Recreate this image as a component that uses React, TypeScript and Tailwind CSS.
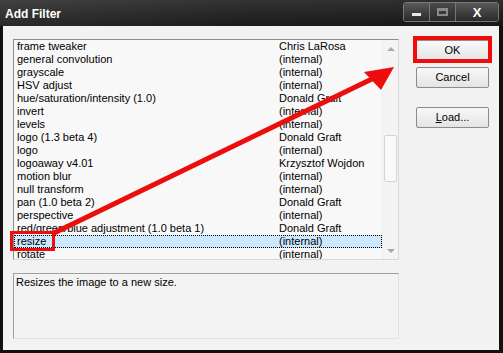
import React from "react";

const rows: [string, string][] = [
  ["frame tweaker", "Chris LaRosa"],
  ["general convolution", "(internal)"],
  ["grayscale", "(internal)"],
  ["HSV adjust", "(internal)"],
  ["hue/saturation/intensity (1.0)", "Donald Graft"],
  ["invert", "(internal)"],
  ["levels", "(internal)"],
  ["logo (1.3 beta 4)", "Donald Graft"],
  ["logo", "(internal)"],
  ["logoaway v4.01", "Krzysztof Wojdon"],
  ["motion blur", "(internal)"],
  ["null transform", "(internal)"],
  ["pan (1.0 beta 2)", "Donald Graft"],
  ["perspective", "(internal)"],
  ["red/green/blue adjustment (1.0 beta 1)", "Donald Graft"],
  ["resize", "(internal)"],
  ["rotate", "(internal)"],
];

function Btn({ children }: { children: React.ReactNode }) {
  return (
    <div className="w-[73px] h-[21px] flex items-center justify-center border border-[#8c8c8c] rounded-[2px] bg-gradient-to-b from-[#f8f8f8] to-[#e4e4e4] text-[11px] text-black">
      {children}
    </div>
  );
}

export default function App() {
  return (
    <div
      className="relative w-[503px] h-[353px] bg-[#111] overflow-hidden"
      style={{ fontFamily: '"Liberation Sans", Arial, sans-serif' }}
    >
      {/* title bar */}
      <div className="h-[26px] flex items-start bg-gradient-to-r from-[#4a4a4a] via-[#252525] to-[#1a1a1a] relative">
        <div className="absolute inset-0 bg-gradient-to-b from-[#3c3c3c] to-[#141414] opacity-60" />
        <div className="relative pl-[5px] pt-[7px] text-white font-bold text-[12px] leading-[14px]">
          Add Filter
        </div>
        <div className="relative ml-auto mr-[4px] mt-[2px] flex h-[20px] rounded-[3px] border border-[#777] overflow-hidden">
          <div className="w-[26px] flex items-center justify-center bg-gradient-to-b from-[#5a5a5a] to-[#2a2a2a] border-r border-[#777]">
            <div className="w-[9px] h-[3px] bg-[#e8e8e8] mt-[5px]" />
          </div>
          <div className="w-[26px] flex items-center justify-center bg-gradient-to-b from-[#4a4a4a] to-[#2a2a2a] border-r border-[#777]">
            <div className="w-[11px] h-[8px] border-2 border-t-[3px] border-[#8a8a8a]" />
          </div>
          <div className="w-[42px] flex items-center justify-center bg-gradient-to-b from-[#5a5a5a] to-[#2a2a2a]">
            <span className="text-white font-bold text-[13px] leading-none">X</span>
          </div>
        </div>
      </div>
      {/* body */}
      <div className="absolute left-[3px] right-[4px] top-[26px] bottom-[3px] bg-[#f2f2f2] flex pl-[10px] pt-[13px] pb-[11px]">
        <div className="flex flex-col w-[386px]">
          <div className="h-[221px] border border-[#8e8e8e] border-r-[#d8d8d8] border-b-[#d8d8d8] bg-[#f8f8f8] flex overflow-hidden">
            <div className="flex-1 overflow-hidden pt-[0px]">
              {rows.map(([a, b], i) => (
                <div
                  key={i}
                  className={
                    "flex h-[13px] items-center text-[11px] leading-[13px] text-black pl-[2px] " +
                    (a === "resize" ? "bg-[#cce8ff] border border-dotted border-black" : "border border-transparent")
                  }
                >
                  <span className="w-[262px] whitespace-nowrap">{a}</span>
                  <span className="whitespace-nowrap">{b}</span>
                </div>
              ))}
            </div>
            <div className="w-[16px] bg-[#f4f4f4] border-l border-[#ececec] flex flex-col items-center relative">
              <div className="mt-[7px] w-0 h-0 border-l-[4px] border-r-[4px] border-b-[4px] border-l-transparent border-r-transparent border-b-[#a8a8b0]" />
              <div className="absolute top-[95px] left-[1px] w-[13px] h-[47px] rounded-[2px] border border-[#d4d4d4] bg-[#f9f9f9]" />
              <div className="mt-auto mb-[6px] w-0 h-0 border-l-[4px] border-r-[4px] border-t-[4px] border-l-transparent border-r-transparent border-t-[#a8a8b0]" />
            </div>
          </div>
          <div className="mt-[13px] h-[66px] border border-[#a0a0a0] border-r-[#e2e2e2] border-b-[#e2e2e2] bg-[#f3f3f3] pl-[2px] pt-[2px] text-[11px] leading-[13px] text-black">
            Resizes the image to a new size.
          </div>
        </div>
        <div className="flex flex-col pl-[17px] pt-[1px]">
          <Btn>OK</Btn>
          <div className="h-[6px]" />
          <Btn>Cancel</Btn>
          <div className="h-[19px]" />
          <Btn>
            <span>
              <span className="underline">L</span>oad...
            </span>
          </Btn>
        </div>
      </div>
      {/* annotations */}
      <div className="absolute left-[413px] top-[36px] w-[79px] h-[27px] border-[4px] border-[#ee0d0d]" />
      <div className="absolute left-[10px] top-[231px] w-[45px] h-[20px] border-[3px] border-[#ee0d0d]" />
      <svg className="absolute left-0 top-0" width="503" height="353">
        <line x1="54" y1="233" x2="376" y2="77" stroke="#ee0d0d" strokeWidth="5" />
        <polygon points="394,67 364,72 381,90" fill="#ee0d0d" />
      </svg>
    </div>
  );
}
